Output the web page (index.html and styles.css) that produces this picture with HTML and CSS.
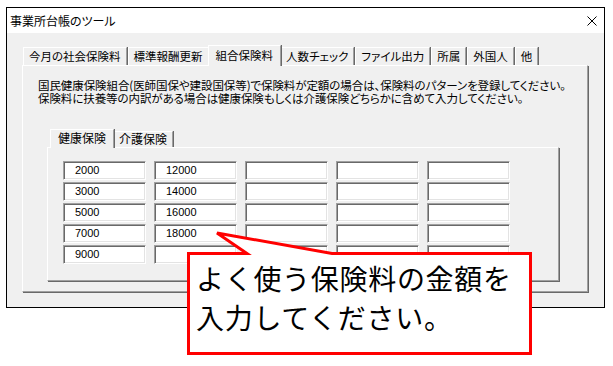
FILE: index.html
```html
<!DOCTYPE html>
<html lang="ja">
<head>
    <meta charset="UTF-8">
    <title>事業所台帳のツール</title>
    <link rel="stylesheet" href="styles.css">
</head>
<body>
    <div class="window">
        <div class="titlebar">
            <span class="title">事業所台帳のツール</span>
            <svg class="close" width="10" height="10" viewBox="0 0 10 10">
                <path d="M0.5 0.5 L9.5 9.5 M9.5 0.5 L0.5 9.5" stroke="#000" stroke-width="1" fill="none"/>
            </svg>
        </div>
        <div class="client">
            <div class="tabstrip">
                <div class="tab">今月の社会保険料</div>
                <div class="tab">標準報酬更新</div>
                <div class="tab active">組合保険料</div>
                <div class="tab">人数チェック</div>
                <div class="tab">ファイル出力</div>
                <div class="tab">所属</div>
                <div class="tab">外国人</div>
                <div class="tab">他</div>
            </div>
            <div class="panel">
                <p class="desc">国民健康保険組合(医師国保や建設国保等)で保険料が定額の場合は、保険料のパターンを登録してください。<br>保険料に扶養等の内訳がある場合は健康保険もしくは介護保険どちらかに含めて入力してください。</p>

                <div class="subtabs">
                    <div class="tabstrip small">
                        <div class="tab active">健康保険</div>
                        <div class="tab">介護保険</div>
                    </div>
                    <div class="subpanel">
                        <div class="fields">
                            <div class="field">2000</div><div class="field">12000</div><div class="field"></div><div class="field"></div><div class="field"></div>
                            <div class="field">3000</div><div class="field">14000</div><div class="field"></div><div class="field"></div><div class="field"></div>
                            <div class="field">5000</div><div class="field">16000</div><div class="field"></div><div class="field"></div><div class="field"></div>
                            <div class="field">7000</div><div class="field">18000</div><div class="field"></div><div class="field"></div><div class="field"></div>
                            <div class="field">9000</div><div class="field"></div><div class="field"></div><div class="field"></div><div class="field"></div>
                        </div>
                    </div>
                </div>
            </div>
        </div>
    </div>

    <!-- annotation balloon over the form -->
    <div class="callout">
        <svg width="348" height="126" viewBox="0 0 348 126">
            <path d="M2.5 22.5 L61 22.5 L31 2 L146 22.5 L344.5 22.5 L344.5 122.5 L2.5 122.5 Z" fill="#fff" stroke="#f00" stroke-width="3"/>
        </svg>
        <div class="callout-text">よく使う保険料の金額を<br>入力してください。</div>
    </div>
</body>
</html>
```

FILE: styles.css
```css
* {
    box-sizing: border-box;
    margin: 0;
    padding: 0;
}

body {
    background: #fff;
    font-family: "Noto Sans CJK JP", "Liberation Sans", sans-serif;
    font-size: 12px;
    color: #000;
    position: relative;
    width: 613px;
    height: 366px;
    overflow: hidden;
}

.window {
    margin: 7px 0 0 6px;
    width: 599px;
    height: 301px;
    border: 1px solid #000;
}

.titlebar {
    height: 25px;
    background: #fff;
    display: flex;
    align-items: center;
    justify-content: space-between;
    padding: 0 7px 0 3px;
}

.title {
    font-size: 12px;
    font-feature-settings: "palt";
}

.client {
    background: #f0f0f0;
    height: 274px;
    padding: 12px 15px 0 15px;
}

/* tabs, classic windows look */
.tabstrip {
    display: flex;
    align-items: flex-end;
    height: 20px;
    padding-left: 1px;
    position: relative;
    z-index: 1;
}

.tab {
    height: 18px;
    padding: 0 5px 0 5px;
    line-height: 16px;
    font-size: 11.5px;
    font-feature-settings: "palt";
    border-top: 1px solid #fff;
    border-left: 1px solid #fff;
    border-right: 1px solid #a0a0a0;
    box-shadow: 1px 0 0 #696969;
    margin-right: 1px;
    background: #f0f0f0;
    white-space: nowrap;
}

.tab.active {
    height: 21px;
    margin: 0 -1px -1px -2px;
    padding: 0 7px 0 7px;
    line-height: 18px;
    position: relative;
    z-index: 2;
}

.panel {
    width: 566px;
    height: 227px;
    border-top: 1px solid #fff;
    border-left: 1px solid #fff;
    border-right: 1px solid #a0a0a0;
    border-bottom: 1px solid #a0a0a0;
    box-shadow: 1px 1px 0 #696969;
}

.desc {
    margin: 13px 0 0 15px;
    line-height: 13px;
    font-size: 11.5px;
    font-feature-settings: "palt";
    letter-spacing: -0.08px;
    white-space: nowrap;
}

.subtabs {
    margin: 24px 0 0 24px;
}

.tabstrip.small {
    padding-left: 5px;
    height: 18px;
}

.tabstrip.small .tab {
    height: 16px;
    line-height: 14px;
    font-size: 12px;
}

.tabstrip.small .tab.active {
    height: 19px;
    line-height: 16px;
}

.subpanel {
    width: 512px;
    height: 134px;
    border-top: 1px solid #fff;
    border-left: 1px solid #fff;
    border-right: 1px solid #a0a0a0;
    border-bottom: 1px solid #a0a0a0;
    box-shadow: 1px 1px 0 #696969;
    padding: 13px 0 0 15px;
}

.fields {
    display: grid;
    grid-template-columns: repeat(5, 83px);
    grid-auto-rows: 19px;
    column-gap: 8px;
    row-gap: 2px;
}

.field {
    background: #fff;
    border: 1px solid;
    border-color: #a0a0a0 #fff #fff #a0a0a0;
    box-shadow: inset 1px 1px 0 #696969, inset -1px -1px 0 #e3e3e3;
    padding-left: 11px;
    font-family: "Liberation Sans", sans-serif;
    font-size: 11px;
    line-height: 17px;
}

.callout {
    position: absolute;
    left: 186px;
    top: 231px;
    width: 348px;
    height: 126px;
}

.callout svg {
    display: block;
}

.callout-text {
    position: absolute;
    left: 10px;
    top: 28px;
    font-size: 28px;
    line-height: 39px;
    letter-spacing: 0.7px;
    white-space: nowrap;
}
```
